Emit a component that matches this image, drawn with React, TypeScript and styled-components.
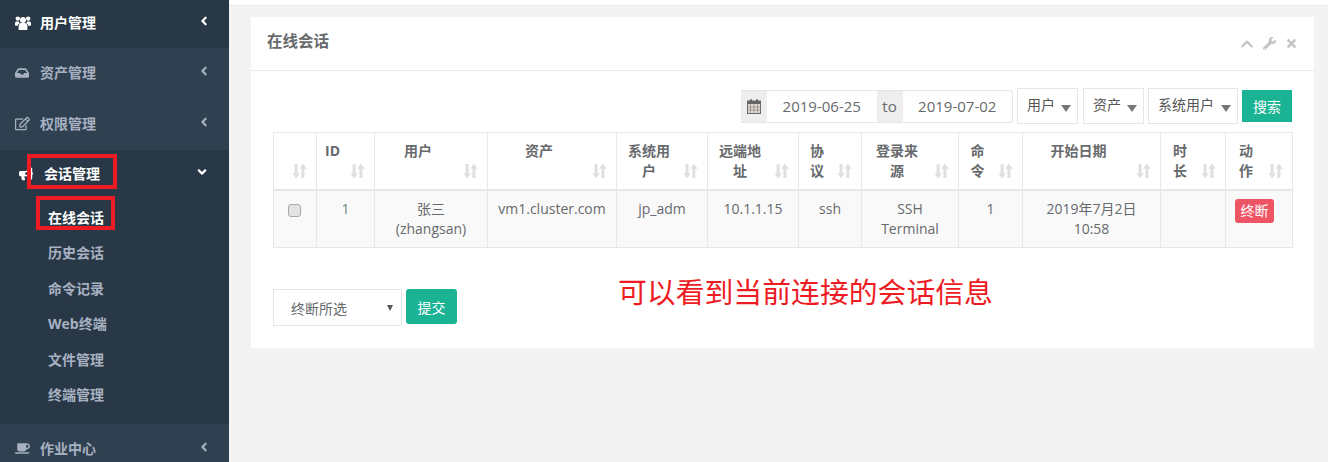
import React from 'react';
import styled, { createGlobalStyle } from 'styled-components';
import {
	FaInbox,
	FaRegEdit,
	FaBullhorn,
	FaCoffee,
	FaChevronUp,
	FaWrench,
	FaTimes,
	FaAngleLeft,
	FaAngleDown,
} from 'react-icons/fa';

const FONT = `"Open Sans", "Noto Sans CJK SC", sans-serif`;

const GlobalStyle = createGlobalStyle`
	html, body {
		margin: 0;
		padding: 0;
		height: 462px;
		overflow: hidden;
		background: #f3f3f4;
		font-family: ${FONT};
		font-size: 14px;
		color: #676a6c;
	}
	* {
		box-sizing: border-box;
	}
`;

const SUB_ITEMS = ['在线会话', '历史会话', '命令记录', 'Web终端', '文件管理', '终端管理'];

const COLUMNS: { title: string; width: number }[] = [
	{ title: '', width: 43 },
	{ title: 'ID', width: 58 },
	{ title: '用户', width: 113 },
	{ title: '资产', width: 129 },
	{ title: '系统用户', width: 91 },
	{ title: '远端地址', width: 91 },
	{ title: '协议', width: 63 },
	{ title: '登录来源', width: 97 },
	{ title: '命令', width: 64 },
	{ title: '开始日期', width: 138 },
	{ title: '时长', width: 65 },
	{ title: '动作', width: 67 },
];

const SortIcon = () => (
	<SortSvg viewBox='0 0 14 15' width='15' height='16'>
		<path d='M2.4 1h2.8v8.6h2.1L3.8 14.6.4 9.6h2z' />
		<path d='M8.8 14h2.8V5.4h2.1L10.2.4 6.8 5.4h2z' />
	</SortSvg>
);

const UsersIcon = () => (
	<svg viewBox='0 0 16 14' width='16' height='14' fill='currentColor'>
		<circle cx='8' cy='4' r='3' />
		<circle cx='2.8' cy='2.6' r='2.2' />
		<circle cx='13.2' cy='2.6' r='2.2' />
		<path d='M3.6 14V10.2C3.6 8.4 4.8 7 6.2 7h3.6c1.4 0 2.6 1.4 2.6 3.2V14z' />
		<path d='M0 9.4V7C0 6 .8 5.4 1.6 5.4h2.2c.2.9.7 1.5 1.2 1.9C3.6 7.8 2.8 8.8 2.6 9.8 1.6 9.8.6 9.7 0 9.4z' />
		<path d='M16 9.4V7c0-1-.8-1.6-1.6-1.6h-2.2c-.2.9-.7 1.5-1.2 1.9 1.4.5 2.2 1.5 2.4 2.5 1 0 2-.1 2.6-.4z' />
	</svg>
);

const CalendarIcon = () => (
	<svg viewBox='0 0 14 15' width='14' height='15'>
		<rect x='0.5' y='2' width='13' height='12.5' fill='#e8dcd2' stroke='#666' />
		<rect x='0.5' y='2' width='13' height='3' fill='#666' />
		<rect x='3' y='0' width='2' height='4' rx='1' fill='#666' />
		<rect x='9' y='0' width='2' height='4' rx='1' fill='#666' />
		<path d='M0 8h14M0 11h14M3.5 5v10M7 5v10M10.5 5v10' stroke='#8a8a8a' strokeWidth='0.8' />
	</svg>
);

const App: React.FC = () => {
	return (
		<Page>
			<GlobalStyle />
			<Sidebar>
				<NavItem $height={48} $lift={2} $dark $active>
					<NavIcon><UsersIcon /></NavIcon>
					<NavLabel>用户管理</NavLabel>
					<NavArrow><FaAngleLeft size={14} /></NavArrow>
				</NavItem>
				<NavItem $height={51} $lift={2}>
					<NavIcon><FaInbox size={14} /></NavIcon>
					<NavLabel>资产管理</NavLabel>
					<NavArrow><FaAngleLeft size={14} /></NavArrow>
				</NavItem>
				<NavItem $height={51} $lift={2}>
					<NavIcon><FaRegEdit size={15} /></NavIcon>
					<NavLabel>权限管理</NavLabel>
					<NavArrow><FaAngleLeft size={14} /></NavArrow>
				</NavItem>
				<OpenGroup>
					<OpenHeader>
						<OpenIcon><FaBullhorn size={14} /></OpenIcon>
						<NavLabel>会话管理</NavLabel>
						<NavArrow><FaAngleDown size={14} /></NavArrow>
					</OpenHeader>
					{SUB_ITEMS.map((item, i) => (
						<SubItem key={item} $active={i === 0}>{item}</SubItem>
					))}
				</OpenGroup>
				<NavItem $height={51} $lift={2}>
					<NavIcon><FaCoffee size={15} /></NavIcon>
					<NavLabel>作业中心</NavLabel>
					<NavArrow><FaAngleLeft size={14} /></NavArrow>
				</NavItem>
				<RedBox $left={27} $top={154} $width={90} $height={35} />
				<RedBox $left={36} $top={196} $width={79} $height={34} />
			</Sidebar>
			<Main>
				<TopLine />
				<Panel>
					<PanelTitle>
						<h5>在线会话</h5>
						<PanelTools>
							<FaChevronUp size={14} />
							<FaWrench size={13} />
							<FaTimes size={13} />
						</PanelTools>
					</PanelTitle>
					<PanelBody>
						<Toolbar>
							<DateGroup>
								<Addon $width={26}><CalendarIcon /></Addon>
								<DateValue>2019-06-25</DateValue>
								<Addon $width={26}>to</Addon>
								<DateValue>2019-07-02</DateValue>
							</DateGroup>
							<Filter $width={61} $spaced>用户<Caret /></Filter>
							<Filter $width={61}>资产<Caret /></Filter>
							<Filter $width={90}>系统用户<Caret /></Filter>
							<SearchButton>搜索</SearchButton>
						</Toolbar>
						<Table>
							<colgroup>
								{COLUMNS.map((c, i) => (
									<col key={i} style={{ width: c.width }} />
								))}
							</colgroup>
							<thead>
								<tr>
									{COLUMNS.map((c, i) => (
										<Th key={i}>
											{c.title}
											<SortIcon />
										</Th>
									))}
								</tr>
							</thead>
							<tbody>
								<tr>
									<Td><CheckBox type='checkbox' /></Td>
									<Td><IdText>1</IdText></Td>
									<Td>张三<br />(zhangsan)</Td>
									<Td>vm1.cluster.com</Td>
									<Td>jp_adm</Td>
									<Td>10.1.1.15</Td>
									<Td>ssh</Td>
									<Td>SSH Terminal</Td>
									<Td>1</Td>
									<Td>2019年7月2日 10:58</Td>
									<Td />
									<Td $left><Badge>终断</Badge></Td>
								</tr>
							</tbody>
						</Table>
						<Footer>
							<ActionSelect>
								终断所选
								<SelectCaret />
							</ActionSelect>
							<SubmitButton>提交</SubmitButton>
							<Note>可以看到当前连接的会话信息</Note>
						</Footer>
					</PanelBody>
				</Panel>
			</Main>
		</Page>
	);
};

const Page = styled.div`
	display: flex;
	width: 1328px;
	height: 462px;
	overflow: hidden;
`;

const Sidebar = styled.nav`
	position: relative;
	flex: 0 0 229px;
	display: flex;
	flex-direction: column;
	height: 462px;
	overflow: hidden;
	background: #2f4050;
`;

const NavItem = styled.div<{ $height: number; $lift?: number; $dark?: boolean; $active?: boolean }>`
	flex: 0 0 ${({ $height }) => $height}px;
	display: flex;
	align-items: center;
	padding: 0 0 ${({ $lift }) => $lift || 0}px 15px;
	font-weight: 700;
	color: ${({ $active }) => ($active ? '#fff' : '#a7b1c2')};
	background: ${({ $dark }) => ($dark ? '#293846' : '#2f4050')};
`;

const NavIcon = styled.span`
	display: flex;
	width: 25px;
`;

const NavLabel = styled.span`
	flex: 1;
	line-height: 20px;
`;

const NavArrow = styled.span`
	display: flex;
	width: 32px;
	margin-top: -4px;
`;

const OpenGroup = styled.div`
	flex: 0 0 274px;
	background: #293846;
`;

const OpenHeader = styled.div`
	display: flex;
	align-items: center;
	height: 49.5px;
	padding: 0 2px 1px 19px;
	font-weight: 700;
	color: #fff;
`;

const OpenIcon = styled.span`
	display: flex;
	width: 25px;
`;

const SubItem = styled.div<{ $active?: boolean }>`
	height: 35.5px;
	padding-left: 48px;
	line-height: 35px;
	font-weight: 700;
	color: ${({ $active }) => ($active ? '#fff' : '#a7b1c2')};
`;

const RedBox = styled.div<{ $left: number; $top: number; $width: number; $height: number }>`
	position: absolute;
	left: ${({ $left }) => $left}px;
	top: ${({ $top }) => $top}px;
	width: ${({ $width }) => $width}px;
	height: ${({ $height }) => $height}px;
	border: 4px solid #ed1c24;
`;

const Main = styled.main`
	flex: 1;
	min-width: 0;
	background: #f3f3f4;
`;

const TopLine = styled.div`
	height: 6px;
	background: #fff;
	border-bottom: 1px solid #e7eaec;
`;

const Panel = styled.section`
	margin: 11px 14px 0 22px;
	background: #fff;
`;

const PanelTitle = styled.header`
	display: flex;
	align-items: center;
	justify-content: space-between;
	height: 54px;
	padding: 0 16px 7px;
	border-bottom: 1px solid #e7eaec;

	h5 {
		margin: 0;
		font-size: 15.5px;
		font-weight: 700;
		color: #676a6c;
	}
`;

const PanelTools = styled.div`
	display: flex;
	align-items: center;
	gap: 9px;
	margin-top: 7px;
	color: #c4c4c4;
`;

const PanelBody = styled.div`
	padding: 17px 22px 22px;
`;

const Toolbar = styled.div`
	display: flex;
	justify-content: flex-end;
	align-items: flex-start;
	gap: 4px;
	height: 37px;
`;

const DateGroup = styled.div`
	display: flex;
	width: 272px;
	height: 33px;
	margin-top: 2px;
	border: 1px solid #e5e6e7;
	border-left: 0;
	border-radius: 0 3px 3px 0;
`;

const Addon = styled.span<{ $width: number }>`
	display: flex;
	align-items: center;
	justify-content: center;
	flex: 0 0 ${({ $width }) => $width}px;
	padding-bottom: 1px;
	background: #eee;
	font-size: 15px;
	color: #676a6c;
`;

const DateValue = styled.span`
	flex: 1;
	font-size: 15px;
	line-height: 31px;
	text-align: center;
`;

const Filter = styled.div<{ $width: number; $spaced?: boolean }>`
	display: flex;
	align-items: center;
	justify-content: space-between;
	flex: 0 0 ${({ $width }) => $width}px;
	height: 36px;
	margin-right: ${({ $spaced }) => ($spaced ? 1 : 0)}px;
	padding: 0 6px 5px 9px;
	border: 1px solid #e5e6e7;
	font-size: 14px;
	color: #555;
`;

const Caret = styled.i`
	margin-top: 10px;
	border-top: 7px solid #777;
	border-left: 5px solid transparent;
	border-right: 5px solid transparent;
`;

const SearchButton = styled.button`
	flex: 0 0 50px;
	height: 32px;
	margin-top: 2px;
	padding: 0;
	border: 0;
	background: #1ab394;
	color: #fff;
	font-family: ${FONT};
	font-size: 14px;
`;

const Table = styled.table`
	width: 1019px;
	margin-top: 7px;
	table-layout: fixed;
	border-collapse: collapse;
	border: 1px solid #e7e7e7;
	line-height: 20px;
`;

const Th = styled.th`
	position: relative;
	height: 57px;
	padding: 8px 34px 8px 8px;
	border: 1px solid #e7e7e7;
	border-bottom-width: 2px;
	font-weight: 700;
	text-align: center;
	vertical-align: top;
`;

const SortSvg = styled.svg`
	position: absolute;
	right: 9px;
	bottom: 10px;
	fill: #dfdfdf;
`;

const Td = styled.td<{ $left?: boolean }>`
	height: 57px;
	padding: 8px;
	border: 1px solid #e7e7e7;
	background: #f9f9f9;
	text-align: ${({ $left }) => ($left ? 'left' : 'center')};
	vertical-align: top;
`;

const IdText = styled.span`
	color: #6b8583;
`;

const CheckBox = styled.input`
	appearance: none;
	display: block;
	width: 13px;
	height: 13px;
	margin: 5px 0 0 6px;
	border: 1px solid #a9a9a9;
	border-radius: 3px;
	background: #e3e3e3;
`;

const Badge = styled.span`
	display: inline-block;
	vertical-align: top;
	height: 24px;
	margin-left: 1px;
	padding: 0 5.5px;
	border-radius: 3px;
	background: #ed5565;
	color: #fff;
	font-size: 14px;
	line-height: 24px;
`;

const Footer = styled.div`
	display: flex;
	align-items: flex-start;
	gap: 4px;
	margin-top: 41px;
`;

const ActionSelect = styled.div`
	position: relative;
	width: 129px;
	height: 37px;
	padding-left: 17px;
	border: 1px solid #e5e6e7;
	line-height: 37px;
`;

const SelectCaret = styled.i`
	position: absolute;
	right: 8px;
	top: 15px;
	border-top: 6px solid #555;
	border-left: 3px solid transparent;
	border-right: 3px solid transparent;
`;

const SubmitButton = styled.button`
	width: 51px;
	height: 35px;
	padding: 0;
	border: 0;
	border-radius: 3px;
	background: #1ab394;
	color: #fff;
	font-family: ${FONT};
	font-size: 14px;
`;

const Note = styled.div`
	margin: -14px 0 0 157px;
	color: #ed1c24;
	font-size: 28.85px;
	line-height: 34px;
	white-space: nowrap;
`;

export default App;
